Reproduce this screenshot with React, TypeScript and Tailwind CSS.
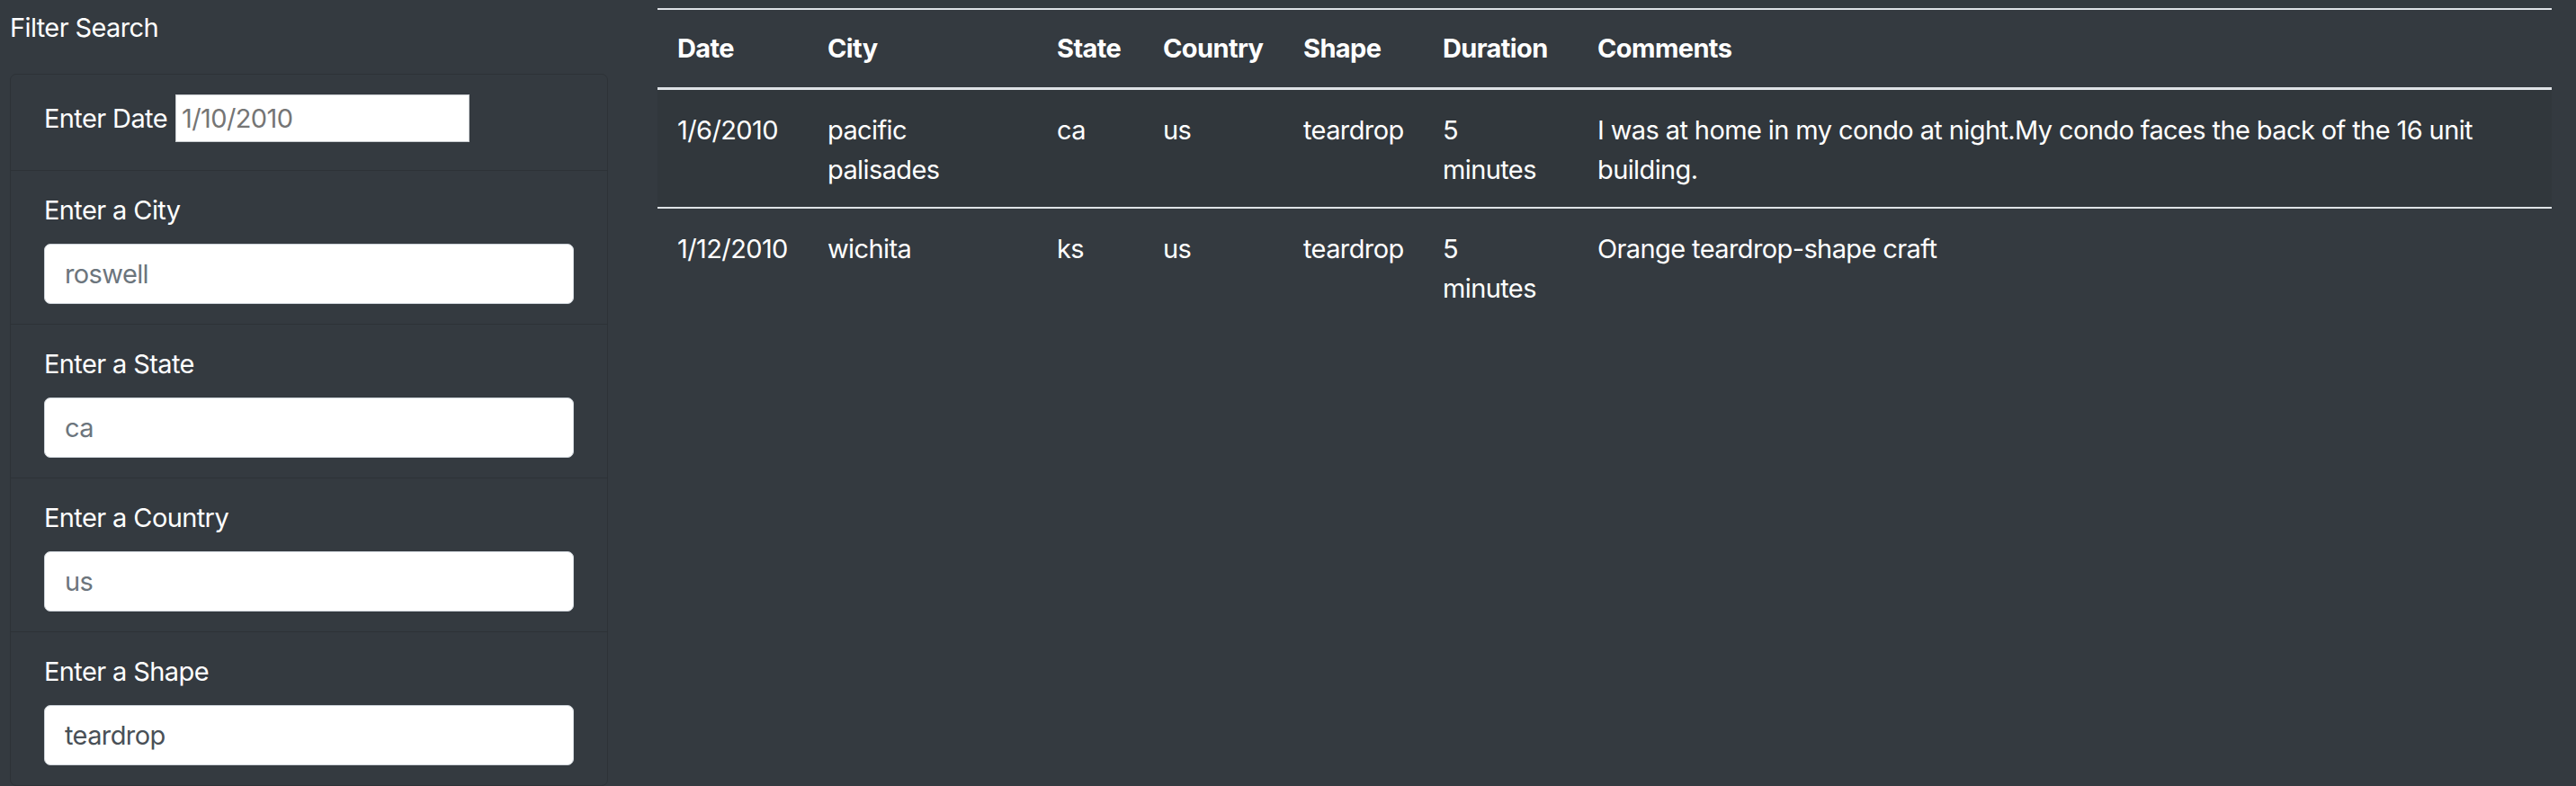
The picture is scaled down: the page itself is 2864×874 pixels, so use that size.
import React from 'react';

type Sighting = {
  date: string;
  city: string;
  state: string;
  country: string;
  shape: string;
  duration: string;
  comments: string;
};

const sightings: Sighting[] = [
  {
    date: '1/6/2010',
    city: 'pacific palisades',
    state: 'ca',
    country: 'us',
    shape: 'teardrop',
    duration: '5 minutes',
    comments: 'I was at home in my condo at night.My condo faces the back of the 16 unit building.',
  },
  {
    date: '1/12/2010',
    city: 'wichita',
    state: 'ks',
    country: 'us',
    shape: 'teardrop',
    duration: '5 minutes',
    comments: 'Orange teardrop-shape craft',
  },
];

const filters = [
  { id: 'city', label: 'Enter a City', placeholder: 'roswell', value: '' },
  { id: 'state', label: 'Enter a State', placeholder: 'ca', value: '' },
  { id: 'country', label: 'Enter a Country', placeholder: 'us', value: '' },
  { id: 'shape', label: 'Enter a Shape', placeholder: 'roswell', value: 'teardrop' },
];

const columns = [
  { key: 'date', title: 'Date', width: 'w-[167px]' },
  { key: 'city', title: 'City', width: 'w-[255px]' },
  { key: 'state', title: 'State', width: 'w-[118px]' },
  { key: 'country', title: 'Country', width: 'w-[156px]' },
  { key: 'shape', title: 'Shape', width: 'w-[155px]' },
  { key: 'duration', title: 'Duration', width: 'w-[172px]' },
  { key: 'comments', title: 'Comments', width: '' },
] as const;

export default function App() {
  return (
    <div className="flex min-h-screen bg-[#343a40] font-['Inter','Noto_Sans',sans-serif] text-[29px] leading-[44px] tracking-[-0.021em] text-white">
      {/* Filter sidebar */}
      <aside className="ml-[11px] w-[665px] shrink-0 pt-[9px]">
        <div className="mb-[29px]">Filter Search</div>
        <ul className="rounded-[7px] border border-[#2d3237]">
          <li className="flex items-center gap-[9px] px-[37px] pt-[22px] pb-[31px]">
            <label htmlFor="datetime">Enter Date</label>
            <input
              id="datetime"
              type="text"
              placeholder="1/10/2010"
              className="h-[53px] w-[327px] border border-[#c9ccd0] bg-white px-[6px] text-[29px] text-black placeholder:text-[#757575]"
            />
          </li>
          {filters.map((f) => (
            <li key={f.id} className="border-t border-[#2d3237] px-[37px] py-[22px]">
              <label htmlFor={f.id} className="mb-[15px] block">
                {f.label}
              </label>
              <input
                id={f.id}
                type="text"
                placeholder={f.placeholder}
                defaultValue={f.value}
                className="block h-[67px] w-full rounded-[7px] border border-[#ced4da] bg-white px-[22px] text-[29px] text-[#495057] placeholder:text-[#6c757d]"
              />
            </li>
          ))}
        </ul>
      </aside>

      {/* Results table */}
      <main className="ml-[55px] mr-[27px] flex-1 pt-[9px]">
        <table className="w-full table-fixed border-collapse text-left">
          <thead>
            <tr>
              {columns.map((c) => (
                <th
                  key={c.key}
                  className={`${c.width} border-t-2 border-b-[3px] border-[#dee2e6] px-[22px] py-[21px] align-top font-bold`}
                >
                  {c.title}
                </th>
              ))}
            </tr>
          </thead>
          <tbody>
            {sightings.map((s, i) => (
              <tr key={i} className={i % 2 === 0 ? 'bg-black/5' : ''}>
                {columns.map((c) => (
                  <td
                    key={c.key}
                    className={`px-[22px] pt-[23px] pb-[19px] align-top ${i > 0 ? 'border-t-2 border-[#dee2e6]' : ''}`}
                  >
                    {s[c.key]}
                  </td>
                ))}
              </tr>
            ))}
          </tbody>
        </table>
      </main>
    </div>
  );
}
